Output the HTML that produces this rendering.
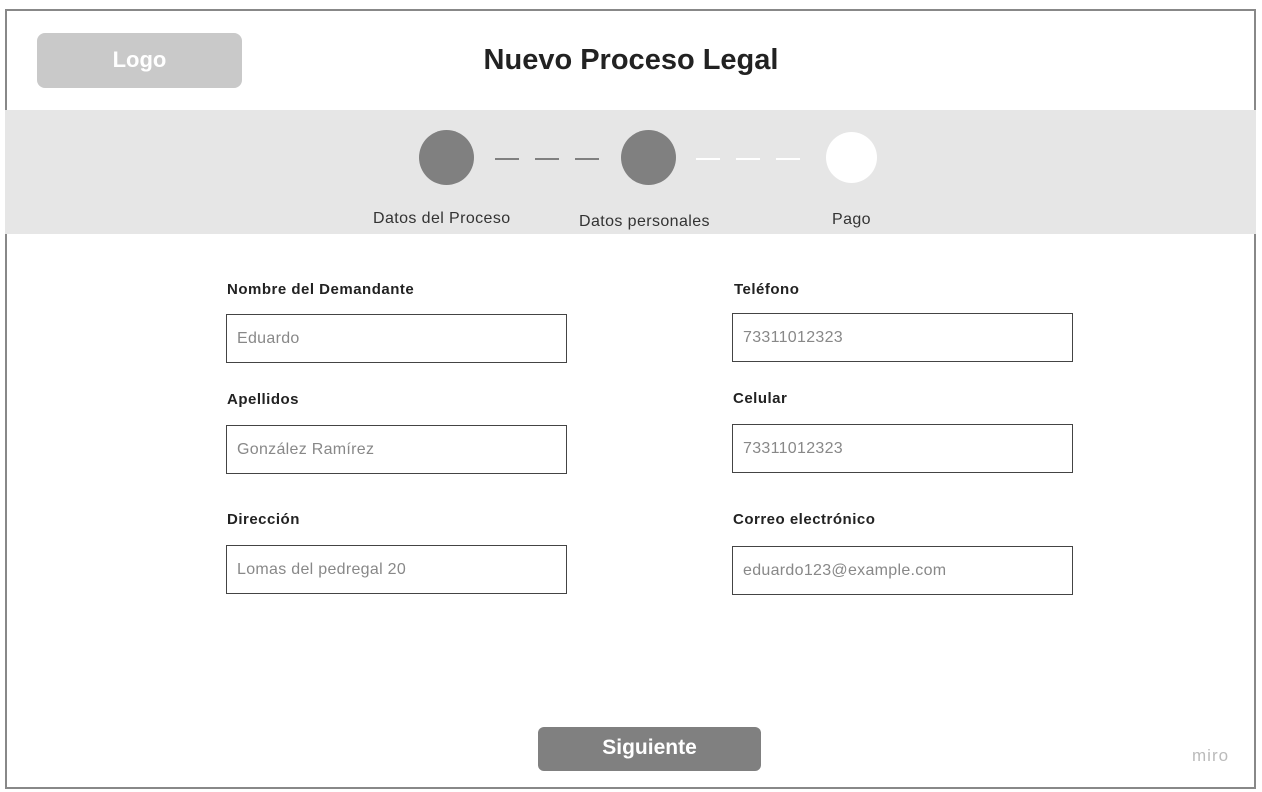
<!DOCTYPE html>
<html><head><meta charset="utf-8"><style>
*{margin:0;padding:0;box-sizing:border-box}
body{width:1262px;height:792px;background:#fff;position:relative;overflow:hidden;font-family:"Liberation Sans",sans-serif}
.a{position:absolute}
.frame{left:5px;top:9px;width:1251px;height:780px;border:2px solid #888}
.lbl{font-size:15px;font-weight:bold;color:#222;letter-spacing:0.5px}
.inp{border:1.5px solid #444;height:49px;width:341px;font-size:16px;color:#888;padding:15px 0 0 10px;letter-spacing:0.3px}
.step{font-size:16px;color:#333;letter-spacing:0.4px}
.c{border-radius:50%;width:55px;height:55px;background:#808080}
.d{height:2px;width:24px}
</style></head><body>
<div class="a frame"></div>
<div class="a" style="left:37px;top:33px;width:205px;height:55px;background:#c9c9c9;border-radius:8px;color:#fff;font-weight:bold;font-size:22px;text-align:center;line-height:53px">Logo</div>
<div class="a" style="left:0;width:1262px;top:44px;text-align:center;font-size:29px;font-weight:bold;color:#222">Nuevo Proceso Legal</div>
<div class="a" style="left:5px;top:110px;width:1251px;height:124px;background:#e6e6e6"></div>
<div class="a c" style="left:419px;top:130px"></div>
<div class="a c" style="left:621px;top:130px"></div>
<div class="a c" style="left:826px;top:132px;width:51px;height:51px;background:#fff"></div>
<div class="a d" style="left:495px;top:158px;background:#808080"></div>
<div class="a d" style="left:535px;top:158px;background:#808080"></div>
<div class="a d" style="left:575px;top:158px;background:#808080"></div>
<div class="a d" style="left:696px;top:158px;background:#fff"></div>
<div class="a d" style="left:736px;top:158px;background:#fff"></div>
<div class="a d" style="left:776px;top:158px;background:#fff"></div>
<div class="a step" style="left:373px;top:210px">Datos del Proceso</div>
<div class="a step" style="left:579px;top:213px">Datos personales</div>
<div class="a step" style="left:832px;top:211px">Pago</div>

<div class="a lbl" style="left:227px;top:281px">Nombre del Demandante</div>
<div class="a inp" style="left:226px;top:314px">Eduardo</div>
<div class="a lbl" style="left:227px;top:391px">Apellidos</div>
<div class="a inp" style="left:226px;top:425px">González Ramírez</div>
<div class="a lbl" style="left:227px;top:511px">Dirección</div>
<div class="a inp" style="left:226px;top:545px">Lomas del pedregal 20</div>

<div class="a lbl" style="left:734px;top:281px">Teléfono</div>
<div class="a inp" style="left:732px;top:313px">73311012323</div>
<div class="a lbl" style="left:733px;top:390px">Celular</div>
<div class="a inp" style="left:732px;top:424px">73311012323</div>
<div class="a lbl" style="left:733px;top:511px">Correo electrónico</div>
<div class="a inp" style="left:732px;top:546px">eduardo123@example.com</div>

<div class="a" style="left:538px;top:727px;width:223px;height:44px;background:#808080;border-radius:6px;color:#fff;font-weight:bold;font-size:21px;text-align:center;line-height:42px">Siguiente</div>
<div class="a" style="left:1192px;top:746px;font-size:17px;color:#bbb;letter-spacing:1px">miro</div>
</body></html>
